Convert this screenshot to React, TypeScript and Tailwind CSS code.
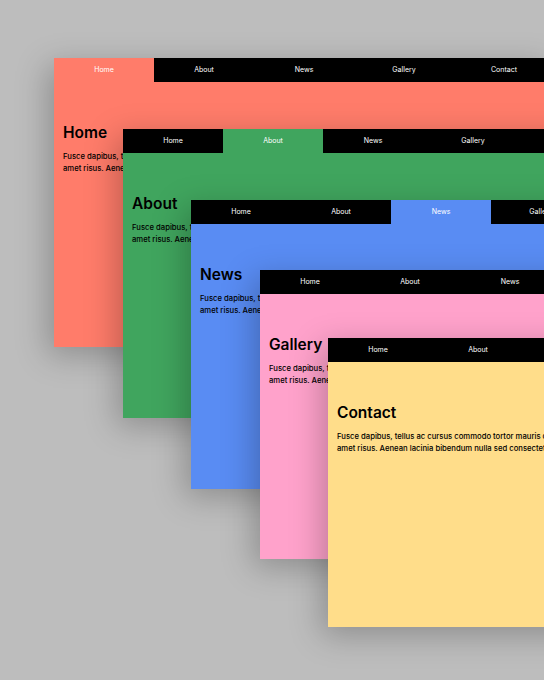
import React from "react";

const items = ["Home", "About", "News", "Gallery", "Contact"];

const panels = [
  { title: "Home", bg: "bg-[#ff7c6a]", pos: "left-[54px] top-[58px]" },
  { title: "About", bg: "bg-[#40a55e]", pos: "left-[123px] top-[129px]" },
  { title: "News", bg: "bg-[#598cf3]", pos: "left-[191px] top-[200px]" },
  { title: "Gallery", bg: "bg-[#ffa2cb]", pos: "left-[260px] top-[270px]" },
  { title: "Contact", bg: "bg-[#ffdd8a]", pos: "left-[328px] top-[338px]" },
];

export default function App() {
  return (
    <div
      className="relative w-[544px] h-[680px] overflow-hidden bg-[#bdbdbd]"
      style={{ fontFamily: "Inter, 'Noto Sans', sans-serif" }}
    >
      {panels.map((p, i) => (
        <div
          key={p.title}
          className={`absolute ${p.pos} w-[500px] h-[289px] ${p.bg} shadow-[-6px_8px_30px_rgba(0,0,0,0.25)] flex flex-col`}
        >
          <nav className="flex h-[24px] bg-black">
            {items.map((it, j) => (
              <div
                key={it}
                className={`w-[100px] flex items-center justify-center text-[7px] text-white ${
                  i === j ? p.bg : ""
                }`}
              >
                {it}
              </div>
            ))}
          </nav>
          <div className="px-[9px] pt-[41px]">
            <h1 className="text-[15.5px] font-semibold leading-[20px] text-black">{p.title}</h1>
            <p className="mt-[8px] text-[7.7px] font-medium leading-[12px] text-black">
              Fusce dapibus, tellus ac cursus commodo tortor mauris condimentum nibh, ut fermentum massa justo sit
              <br />
              amet risus. Aenean lacinia bibendum nulla sed consectetur.
            </p>
          </div>
        </div>
      ))}
    </div>
  );
}
